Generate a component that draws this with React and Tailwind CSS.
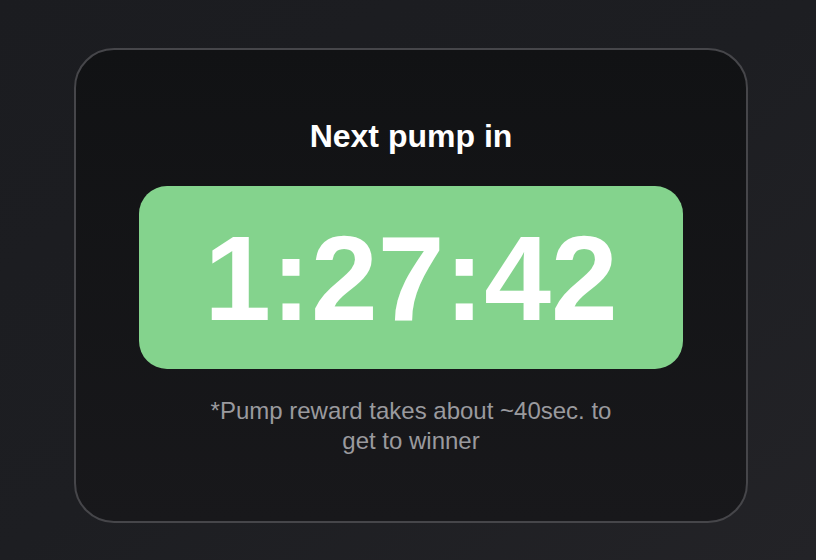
export default function App() {
  return (
    <div
      className="min-h-[560px] w-full bg-gradient-to-br from-[#1b1c20] via-[#1d1e22] to-[#232327] pt-[48px] pl-[74px]"
      style={{ fontFamily: '"Liberation Sans", Arial, sans-serif' }}
    >
      <div className="w-[674px] h-[475px] rounded-[40px] border-2 border-[#46464a] bg-gradient-to-b from-[#111214] to-[#18181b] flex flex-col items-center pt-[68px]">
        <h2 className="text-[32px] font-bold text-white leading-[36px]">Next pump in</h2>
        <div className="mt-[32px] w-[544px] h-[183px] rounded-[28px] bg-[#84d38d] flex items-center justify-center">
          <span className="text-[120px] font-bold text-white leading-none">1:27:42</span>
        </div>
        <p className="mt-[27px] w-[420px] text-center text-[24px] leading-[30px] text-[#9a9a9e]">
          *Pump reward takes about ~40sec. to get to winner
        </p>
      </div>
    </div>
  );
}
